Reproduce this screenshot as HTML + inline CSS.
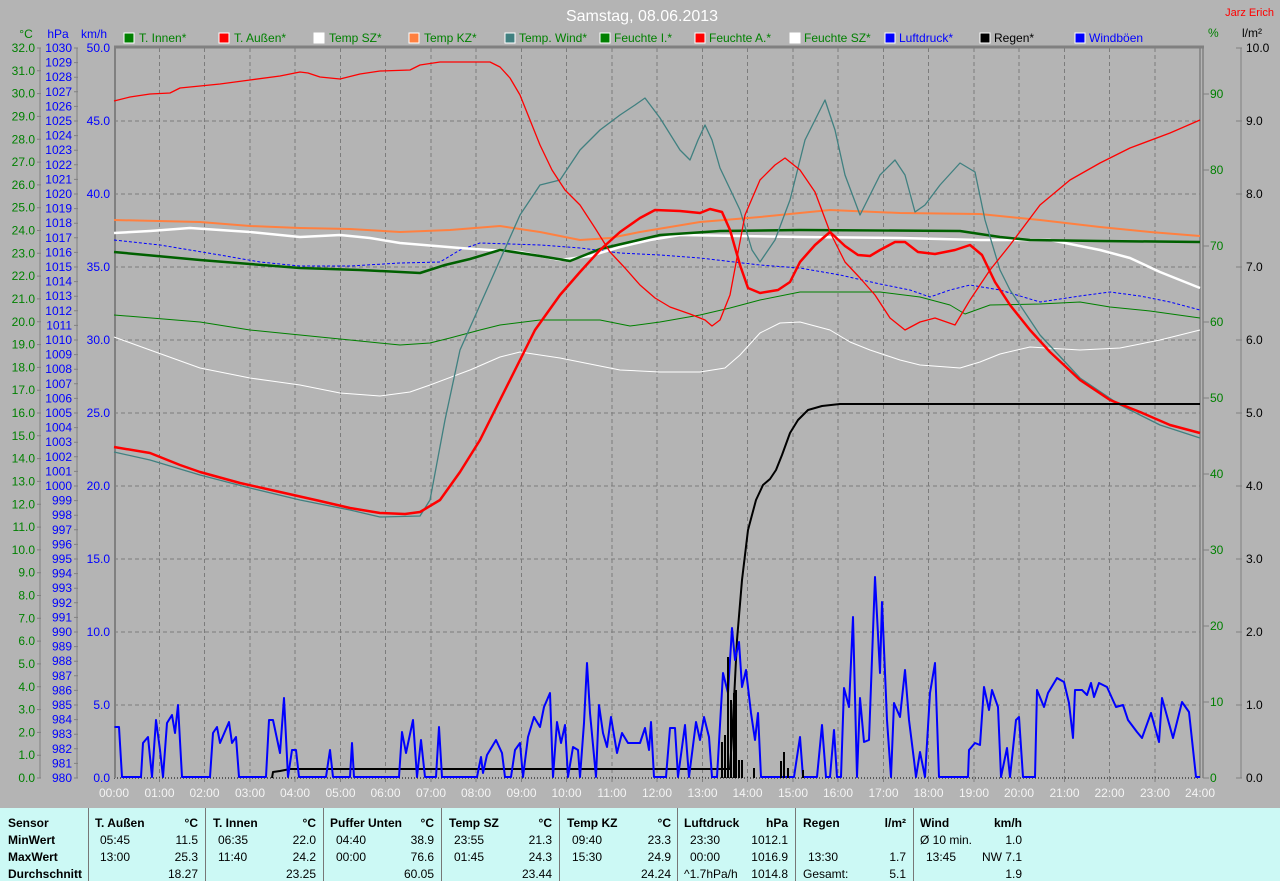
<!DOCTYPE html>
<html><head><meta charset="utf-8"><style>
html,body{margin:0;padding:0;background:#b4b4b4;width:1280px;height:881px;overflow:hidden}
svg{display:block}
text{font-family:"Liberation Sans",Arial,sans-serif;font-size:12px}
.g{fill:#008000}.b{fill:#0000ff}.k{fill:#000}
.tb text{font-size:12px}
.h{font-weight:bold}
</style></head><body>
<svg width="1280" height="881" xmlns="http://www.w3.org/2000/svg">
<rect width="1280" height="881" fill="#b4b4b4"/>
<text x="642" y="21" text-anchor="middle" fill="#fff" style="font-size:16px">Samstag, 08.06.2013</text>
<text x="1274" y="16" text-anchor="end" fill="#ff0000" style="font-size:11px">Jarz Erich</text>
<!-- axis titles -->
<text x="26" y="38" text-anchor="middle" class="g">°C</text>
<text x="58" y="38" text-anchor="middle" class="b">hPa</text>
<text x="94" y="38" text-anchor="middle" class="b">km/h</text>
<text x="1208" y="37" class="g">%</text>
<text x="1242" y="37" class="k">l/m²</text>
<!-- legend -->
<g>
<rect x="124" y="33" width="10" height="10" fill="#008000" stroke="#fff"/><text x="139" y="42" class="g">T. Innen*</text>
<rect x="219" y="33" width="10" height="10" fill="#ff0000" stroke="#fff"/><text x="234" y="42" class="g">T. Außen*</text>
<rect x="314" y="33" width="10" height="10" fill="#fff" stroke="#fff"/><text x="329" y="42" class="g">Temp SZ*</text>
<rect x="409" y="33" width="10" height="10" fill="#ff8040" stroke="#fff"/><text x="424" y="42" class="g">Temp KZ*</text>
<rect x="505" y="33" width="10" height="10" fill="#408080" stroke="#fff"/><text x="519" y="42" class="g">Temp. Wind*</text>
<rect x="600" y="33" width="10" height="10" fill="#008000" stroke="#fff"/><text x="614" y="42" class="g">Feuchte I.*</text>
<rect x="695" y="33" width="10" height="10" fill="#ff0000" stroke="#fff"/><text x="709" y="42" class="g">Feuchte A.*</text>
<rect x="790" y="33" width="10" height="10" fill="#fff" stroke="#fff"/><text x="804" y="42" class="g">Feuchte SZ*</text>
<rect x="885" y="33" width="10" height="10" fill="#0000ff" stroke="#fff"/><text x="899" y="42" class="b">Luftdruck*</text>
<rect x="980" y="33" width="10" height="10" fill="#000" stroke="#fff"/><text x="994" y="42" class="k">Regen*</text>
<rect x="1075" y="33" width="10" height="10" fill="#0000ff" stroke="#fff"/><text x="1089" y="42" class="b">Windböen</text>
</g>
<!-- grid -->
<g stroke="#7c7c7c" stroke-dasharray="4,3" stroke-width="1">
<path d="M114 121H1200M114 194H1200M114 267H1200M114 340H1200M114 413H1200M114 486H1200M114 559H1200M114 632H1200M114 705H1200"/>
<path d="M159.5 48V778M204.5 48V778M250 48V778M295 48V778M340.5 48V778M385.5 48V778M431 48V778M476 48V778M521.5 48V778M566.5 48V778M612 48V778M657 48V778M702.5 48V778M747.5 48V778M793 48V778M838 48V778M883.5 48V778M928.5 48V778M974 48V778M1019 48V778M1064.5 48V778M1109.5 48V778M1155 48V778"/>
</g>
<path d="M114 778H1200" stroke="#000" stroke-dasharray="1,2"/>
<g stroke="#808080" fill="none">
<path d="M114 47H1204" stroke-width="3"/>
<path d="M115 47V778" stroke-width="2"/>
<path d="M1200 47V778M1203 47V778" stroke-width="1.5"/>
<path d="M40 48V778M77 48V778M1241 48V778" stroke-width="1"/>
</g>
<!-- axis ticks -->
<g stroke="#808080">
<path d="M37 48h4M37 70.8h4M37 93.6h4M37 116.4h4M37 139.3h4M37 162.1h4M37 184.9h4M37 207.7h4M37 230.5h4M37 253.3h4M37 276.1h4M37 298.9h4M37 321.8h4M37 344.6h4M37 367.4h4M37 390.2h4M37 413h4M37 435.8h4M37 458.6h4M37 481.4h4M37 504.3h4M37 527.1h4M37 549.9h4M37 572.7h4M37 595.5h4M37 618.3h4M37 641.1h4M37 663.9h4M37 686.8h4M37 709.6h4M37 732.4h4M37 755.2h4M37 778h4"/>
<path d="M74 48h4M74 121h4M74 194h4M74 267h4M74 340h4M74 413h4M74 486h4M74 559h4M74 632h4M74 705h4M74 778h4M74 62.6h4M74 77.2h4M74 91.8h4M74 106.4h4M74 135.6h4M74 150.2h4M74 164.8h4M74 179.4h4M74 208.6h4M74 223.2h4M74 237.8h4M74 252.4h4M74 281.6h4M74 296.2h4M74 310.8h4M74 325.4h4M74 354.6h4M74 369.2h4M74 383.8h4M74 398.4h4M74 427.6h4M74 442.2h4M74 456.8h4M74 471.4h4M74 500.6h4M74 515.2h4M74 529.8h4M74 544.4h4M74 573.6h4M74 588.2h4M74 602.8h4M74 617.4h4M74 646.6h4M74 661.2h4M74 675.8h4M74 690.4h4M74 719.6h4M74 734.2h4M74 748.8h4M74 763.4h4"/>
<path d="M1203 94h6M1203 170h6M1203 246h6M1203 322h6M1203 398h6M1203 474h6M1203 550h6M1203 626h6M1203 702h6M1203 778h6"/>
<path d="M1236 48h6M1236 121h6M1236 194h6M1236 267h6M1236 340h6M1236 413h6M1236 486h6M1236 559h6M1236 632h6M1236 705h6M1236 778h6"/>
<path d="M159.5 778v4M204.5 778v4M250 778v4M295 778v4M340.5 778v4M385.5 778v4M431 778v4M476 778v4M521.5 778v4M566.5 778v4M612 778v4M657 778v4M702.5 778v4M747.5 778v4M793 778v4M838 778v4M883.5 778v4M928.5 778v4M974 778v4M1019 778v4M1064.5 778v4M1109.5 778v4M1155 778v4"/>
</g>
<!-- °C labels -->
<g class="g" text-anchor="end" dominant-baseline="central">
<text x="35" y="48">32.0</text><text x="35" y="70.8">31.0</text><text x="35" y="93.6">30.0</text><text x="35" y="116.4">29.0</text><text x="35" y="139.3">28.0</text><text x="35" y="162.1">27.0</text><text x="35" y="184.9">26.0</text><text x="35" y="207.7">25.0</text><text x="35" y="230.5">24.0</text><text x="35" y="253.3">23.0</text><text x="35" y="276.1">22.0</text><text x="35" y="298.9">21.0</text><text x="35" y="321.8">20.0</text><text x="35" y="344.6">19.0</text><text x="35" y="367.4">18.0</text><text x="35" y="390.2">17.0</text><text x="35" y="413">16.0</text><text x="35" y="435.8">15.0</text><text x="35" y="458.6">14.0</text><text x="35" y="481.4">13.0</text><text x="35" y="504.3">12.0</text><text x="35" y="527.1">11.0</text><text x="35" y="549.9">10.0</text><text x="35" y="572.7">9.0</text><text x="35" y="595.5">8.0</text><text x="35" y="618.3">7.0</text><text x="35" y="641.1">6.0</text><text x="35" y="663.9">5.0</text><text x="35" y="686.8">4.0</text><text x="35" y="709.6">3.0</text><text x="35" y="732.4">2.0</text><text x="35" y="755.2">1.0</text><text x="35" y="778">0.0</text>
</g>
<g class="b" text-anchor="end" dominant-baseline="central" style="font-size:11.5px">
<text x="72" y="48">1030</text><text x="72" y="62.6">1029</text><text x="72" y="77.2">1028</text><text x="72" y="91.8">1027</text><text x="72" y="106.4">1026</text><text x="72" y="121">1025</text><text x="72" y="135.6">1024</text><text x="72" y="150.2">1023</text><text x="72" y="164.8">1022</text><text x="72" y="179.4">1021</text><text x="72" y="194">1020</text><text x="72" y="208.6">1019</text><text x="72" y="223.2">1018</text><text x="72" y="237.8">1017</text><text x="72" y="252.4">1016</text><text x="72" y="267">1015</text><text x="72" y="281.6">1014</text><text x="72" y="296.2">1013</text><text x="72" y="310.8">1012</text><text x="72" y="325.4">1011</text><text x="72" y="340">1010</text><text x="72" y="354.6">1009</text><text x="72" y="369.2">1008</text><text x="72" y="383.8">1007</text><text x="72" y="398.4">1006</text><text x="72" y="413">1005</text><text x="72" y="427.6">1004</text><text x="72" y="442.2">1003</text><text x="72" y="456.8">1002</text><text x="72" y="471.4">1001</text><text x="72" y="486">1000</text><text x="72" y="500.6">999</text><text x="72" y="515.2">998</text><text x="72" y="529.8">997</text><text x="72" y="544.4">996</text><text x="72" y="559">995</text><text x="72" y="573.6">994</text><text x="72" y="588.2">993</text><text x="72" y="602.8">992</text><text x="72" y="617.4">991</text><text x="72" y="632">990</text><text x="72" y="646.6">989</text><text x="72" y="661.2">988</text><text x="72" y="675.8">987</text><text x="72" y="690.4">986</text><text x="72" y="705">985</text><text x="72" y="719.6">984</text><text x="72" y="734.2">983</text><text x="72" y="748.8">982</text><text x="72" y="763.4">981</text><text x="72" y="778">980</text>
</g>
<g class="b" text-anchor="end" dominant-baseline="central">
<text x="110" y="48">50.0</text><text x="110" y="121">45.0</text><text x="110" y="194">40.0</text><text x="110" y="267">35.0</text><text x="110" y="340">30.0</text><text x="110" y="413">25.0</text><text x="110" y="486">20.0</text><text x="110" y="559">15.0</text><text x="110" y="632">10.0</text><text x="110" y="705">5.0</text><text x="110" y="778">0.0</text>
</g>
<g class="g" dominant-baseline="central">
<text x="1210" y="94">90</text><text x="1210" y="170">80</text><text x="1210" y="246">70</text><text x="1210" y="322">60</text><text x="1210" y="398">50</text><text x="1210" y="474">40</text><text x="1210" y="550">30</text><text x="1210" y="626">20</text><text x="1210" y="702">10</text><text x="1210" y="778">0</text>
</g>
<g class="k" dominant-baseline="central">
<text x="1246" y="48">10.0</text><text x="1246" y="121">9.0</text><text x="1246" y="194">8.0</text><text x="1246" y="267">7.0</text><text x="1246" y="340">6.0</text><text x="1246" y="413">5.0</text><text x="1246" y="486">4.0</text><text x="1246" y="559">3.0</text><text x="1246" y="632">2.0</text><text x="1246" y="705">1.0</text><text x="1246" y="778">0.0</text>
</g>
<g fill="#f4f4f4" text-anchor="middle">
<text x="114" y="797">00:00</text><text x="159.5" y="797">01:00</text><text x="204.5" y="797">02:00</text><text x="250" y="797">03:00</text><text x="295" y="797">04:00</text><text x="340.5" y="797">05:00</text><text x="385.5" y="797">06:00</text><text x="431" y="797">07:00</text><text x="476" y="797">08:00</text><text x="521.5" y="797">09:00</text><text x="566.5" y="797">10:00</text><text x="612" y="797">11:00</text><text x="657" y="797">12:00</text><text x="702.5" y="797">13:00</text><text x="747.5" y="797">14:00</text><text x="793" y="797">15:00</text><text x="838" y="797">16:00</text><text x="883.5" y="797">17:00</text><text x="928.5" y="797">18:00</text><text x="974" y="797">19:00</text><text x="1019" y="797">20:00</text><text x="1064.5" y="797">21:00</text><text x="1109.5" y="797">22:00</text><text x="1155" y="797">23:00</text><text x="1200" y="797">24:00</text>
</g>
<!-- curves -->
<g fill="none" stroke-linejoin="round">
<polyline stroke="#fff" stroke-width="1" points="114,337 150,350 200,368 250,378 300,385 340,393 380,396 410,392 430,385 470,370 500,357 520,352 560,358 600,366 620,370 660,372 700,372 725,368 740,355 760,333 780,323 800,322 830,330 850,342 870,350 900,360 920,365 960,368 980,362 1000,354 1030,347 1080,350 1120,348 1160,340 1200,330"/>
<polyline stroke="#008000" stroke-width="1" points="114,315 200,322 250,330 300,335 350,340 400,345 430,343 450,338 480,330 500,325 540,320 600,320 630,326 660,322 700,315 730,308 760,300 800,292 880,292 920,297 950,305 965,314 990,305 1040,304 1080,302 1110,307 1150,311 1200,318"/>
<polyline stroke="#0000ff" stroke-width="1" stroke-dasharray="3,2" points="114,240 160,245 220,255 260,262 300,266 350,266 400,263 440,262 460,250 480,243 540,245 580,248 620,253 660,255 700,258 760,265 800,268 840,275 880,284 910,290 930,297 950,290 970,285 1000,290 1040,302 1080,296 1110,292 1140,296 1170,302 1200,310"/>
<polyline stroke="#ff8040" stroke-width="2" points="114,220 200,222 250,226 300,228 350,229 400,232 450,230 500,226 540,232 580,240 610,238 640,232 700,222 760,217 830,210 900,213 980,214 1040,220 1100,227 1150,232 1200,236"/>
<polyline stroke="#fff" stroke-width="2.5" points="114,233 150,231 190,228 250,232 300,237 340,235 370,238 400,243 460,248 520,252 560,260 590,256 620,247 650,240 680,235 740,236 800,237 900,238 980,240 1050,240 1100,250 1130,258 1160,272 1200,288"/>
<polyline stroke="#006000" stroke-width="2.5" points="114,252 200,260 250,264 300,268 360,270 420,273 445,265 470,259 500,250 540,256 570,261 600,249 630,242 660,235 720,231 800,230 960,231 1000,237 1030,240 1100,241 1200,242"/>
<polyline stroke="#408080" stroke-width="1.3" points="114,452 150,460 200,475 250,488 300,500 350,510 380,517 420,516 430,500 445,420 460,350 480,305 500,260 520,215 540,185 560,180 580,150 600,130 620,115 635,105 645,98 660,118 680,150 690,160 698,140 705,125 712,140 720,168 740,210 752,250 760,262 775,240 790,200 805,140 825,100 835,130 845,175 860,215 870,195 880,175 895,160 905,175 915,212 925,205 940,185 960,163 975,172 985,220 1000,270 1010,290 1040,335 1080,378 1120,405 1160,425 1200,438"/>
<polyline stroke="#ff0000" stroke-width="1.3" points="114,101 130,97 150,94 170,93 180,88 200,86 220,84 250,80 280,76 300,72 308,73 320,77 340,79 360,74 380,71 410,70 420,65 440,62 490,62 500,67 510,78 520,95 530,120 540,145 552,170 565,190 580,205 595,228 610,252 625,268 640,285 655,298 670,307 690,314 705,320 712,326 720,320 730,295 745,215 760,180 775,165 785,158 800,170 815,192 830,232 845,262 860,278 875,295 890,318 905,330 920,322 935,318 955,325 970,300 990,270 1010,245 1040,205 1070,180 1100,163 1130,148 1170,133 1200,120"/>
<polyline stroke="#ff0000" stroke-width="2.5" points="114,447 150,453 180,465 200,472 240,483 280,492 320,501 350,508 380,513 405,514 420,512 440,500 460,472 480,440 500,400 520,360 535,330 560,295 580,272 600,250 620,232 640,218 655,210 680,211 700,213 710,209 722,212 730,230 740,265 748,288 760,293 778,290 790,282 800,262 815,245 830,232 845,246 858,255 870,256 880,250 895,242 905,242 918,252 935,254 955,250 970,245 982,255 995,282 1010,305 1030,330 1050,352 1080,380 1110,400 1140,412 1170,425 1200,433"/>
<polyline stroke="#000" stroke-width="2" points="272,778 273,772 280,771 290,769 730,769 733,720 737,640 742,580 748,530 756,500 763,485 770,479 776,470 782,455 790,433 798,420 808,410 822,406 840,404 1200,404"/>
<polyline stroke="#0000ff" stroke-width="2" points="114.5,727 119,727 122,777 141,777 143,743 148,737 152,777 156,720 160,750 163,777 167,723 172,715 175,733 178,705 182,777 210,777 213,733 217,727 220,743 229,722 232,743 236,737 239,777 266,777 269,720 273,720 280,753 284,698 288,777 292,750 296,750 299,777 326,777 330,750 333,777 350,777 352,743 354,777 399,777 402,732 406,753 413,720 417,777 421,740 425,777 436,777 439,727 442,777 477,777 481,757 483,773 487,755 496,740 502,753 505,777 511,777 515,750 520,743 523,777 528,737 534,717 540,727 544,707 550,693 553,777 557,722 561,743 565,725 568,777 573,747 578,750 580,777 584,723 587,663 590,713 596,777 599,705 603,733 607,747 611,717 617,753 622,733 628,743 640,743 645,728 649,750 651,722 654,777 666,777 670,728 675,728 678,777 685,725 689,777 696,722 700,740 704,717 709,737 712,777 717,777 723,673 728,693 732,628 735,660 739,642 742,687 746,670 751,713 755,740 758,713 761,777 794,777 800,737 803,777 817,777 822,725 826,777 830,777 834,730 837,777 841,777 844,688 849,707 853,617 855,697 857,777 860,698 864,742 869,740 875,577 880,673 882,602 887,720 891,777 894,703 900,717 905,670 909,720 914,760 916,777 920,752 925,777 930,693 935,663 939,777 968,777 969,750 975,743 980,745 984,687 989,710 992,690 998,707 1001,777 1007,748 1010,777 1016,720 1019,717 1023,777 1035,777 1037,690 1044,707 1048,693 1057,678 1064,682 1069,703 1073,738 1075,690 1082,690 1087,695 1091,683 1094,697 1099,683 1107,687 1116,707 1123,705 1128,720 1137,732 1142,738 1151,713 1159,742 1162,698 1173,738 1182,702 1189,712 1196,777 1200,777"/>
</g>
<g fill="#000">
<rect x="721" y="742" width="2" height="36"/><rect x="724" y="735" width="2" height="43"/><rect x="727" y="657" width="2" height="121"/><rect x="730" y="700" width="2" height="78"/><rect x="733" y="693" width="2" height="85"/><rect x="735" y="690" width="2" height="88"/><rect x="738" y="760" width="2" height="18"/><rect x="741" y="760" width="2" height="18"/><rect x="753" y="768" width="2" height="10"/><rect x="780" y="761" width="2" height="17"/><rect x="783" y="752" width="2" height="26"/><rect x="787" y="768" width="2" height="10"/><rect x="802" y="770" width="2" height="8"/>
</g>
<!-- table -->
<rect x="0" y="808" width="1280" height="73" fill="#ccf9f5"/>
<g stroke="#777" stroke-width="1">
<path d="M88.5 808V881M205.5 808V881M323.5 808V881M441.5 808V881M559.5 808V881M677.5 808V881M795.5 808V881M913.5 808V881"/>
</g>
<g class="tb" fill="#000">
<text x="8" y="827" class="h">Sensor</text><text x="8" y="844" class="h">MinWert</text><text x="8" y="861" class="h">MaxWert</text><text x="8" y="878" class="h">Durchschnitt</text>
<text x="95" y="827" class="h">T. Außen</text><text x="198" y="827" class="h" text-anchor="end">°C</text>
<text x="100" y="844">05:45</text><text x="198" y="844" text-anchor="end">11.5</text>
<text x="100" y="861">13:00</text><text x="198" y="861" text-anchor="end">25.3</text>
<text x="198" y="878" text-anchor="end">18.27</text>
<text x="213" y="827" class="h">T. Innen</text><text x="316" y="827" class="h" text-anchor="end">°C</text>
<text x="218" y="844">06:35</text><text x="316" y="844" text-anchor="end">22.0</text>
<text x="218" y="861">11:40</text><text x="316" y="861" text-anchor="end">24.2</text>
<text x="316" y="878" text-anchor="end">23.25</text>
<text x="330" y="827" class="h">Puffer Unten</text><text x="434" y="827" class="h" text-anchor="end">°C</text>
<text x="336" y="844">04:40</text><text x="434" y="844" text-anchor="end">38.9</text>
<text x="336" y="861">00:00</text><text x="434" y="861" text-anchor="end">76.6</text>
<text x="434" y="878" text-anchor="end">60.05</text>
<text x="449" y="827" class="h">Temp SZ</text><text x="552" y="827" class="h" text-anchor="end">°C</text>
<text x="454" y="844">23:55</text><text x="552" y="844" text-anchor="end">21.3</text>
<text x="454" y="861">01:45</text><text x="552" y="861" text-anchor="end">24.3</text>
<text x="552" y="878" text-anchor="end">23.44</text>
<text x="567" y="827" class="h">Temp KZ</text><text x="671" y="827" class="h" text-anchor="end">°C</text>
<text x="572" y="844">09:40</text><text x="671" y="844" text-anchor="end">23.3</text>
<text x="572" y="861">15:30</text><text x="671" y="861" text-anchor="end">24.9</text>
<text x="671" y="878" text-anchor="end">24.24</text>
<text x="684" y="827" class="h">Luftdruck</text><text x="788" y="827" class="h" text-anchor="end">hPa</text>
<text x="690" y="844">23:30</text><text x="788" y="844" text-anchor="end">1012.1</text>
<text x="690" y="861">00:00</text><text x="788" y="861" text-anchor="end">1016.9</text>
<text x="684" y="878">^1.7hPa/h</text><text x="788" y="878" text-anchor="end">1014.8</text>
<text x="803" y="827" class="h">Regen</text><text x="906" y="827" class="h" text-anchor="end">l/m²</text>
<text x="808" y="861">13:30</text><text x="906" y="861" text-anchor="end">1.7</text>
<text x="803" y="878">Gesamt:</text><text x="906" y="878" text-anchor="end">5.1</text>
<text x="920" y="827" class="h">Wind</text><text x="1022" y="827" class="h" text-anchor="end">km/h</text>
<text x="920" y="844">Ø 10 min.</text><text x="1022" y="844" text-anchor="end">1.0</text>
<text x="926" y="861">13:45</text><text x="1022" y="861" text-anchor="end">NW 7.1</text>
<text x="1022" y="878" text-anchor="end">1.9</text>
</g>
</svg>
</body></html>
